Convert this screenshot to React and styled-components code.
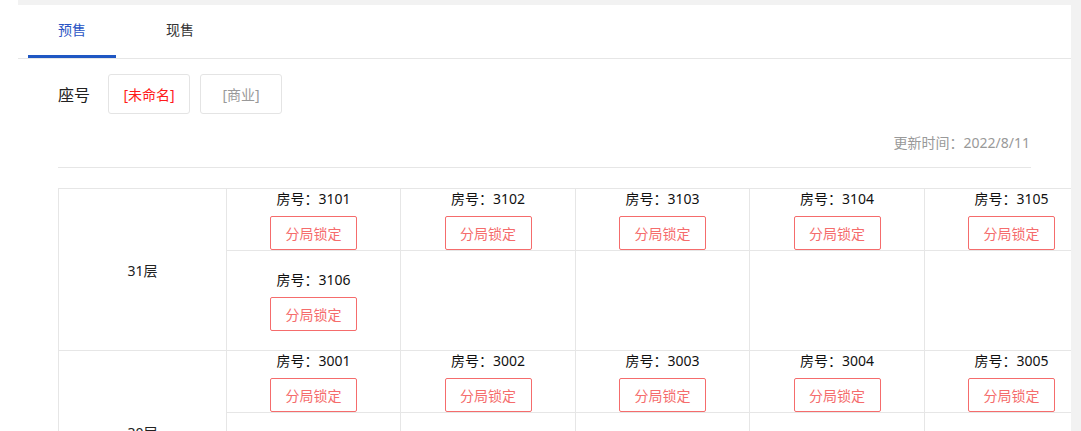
import React, { useState } from "react";
import styled, { createGlobalStyle } from "styled-components";

const GlobalStyle = createGlobalStyle`
  html, body {
    margin: 0;
    padding: 0;
    background: #ffffff;
    overflow: hidden;
    font-family: "Noto Sans", "Noto Sans CJK SC", sans-serif;
    color: #222;
  }
  * { box-sizing: border-box; }
`;

const Main = styled.div`
  margin-left: 18px;
  padding: 5px 10px 0 0;
  background: #f2f2f2;
  min-height: 431px;
`;

const Card = styled.div`
  background: #fff;
  overflow: hidden;
  min-height: 426px;
`;

const TabBar = styled.div`
  display: flex;
  gap: 20px;
  padding-left: 10px;
  border-bottom: 1px solid #e6e6e6;
`;

const Tab = styled.div`
  width: 88px;
  height: 53px;
  line-height: 50px;
  text-align: center;
  font-size: 14px;
  color: ${(p) => (p.$active ? "#2a55c4" : "#333")};
  border-bottom: 3px solid ${(p) => (p.$active ? "#1f57c3" : "transparent")};
  cursor: pointer;
`;

const Body = styled.div`
  padding: 15px 40px 0 40px;
`;

const SeatRow = styled.div`
  display: flex;
  align-items: center;
  gap: 10px;
`;

const SeatLabel = styled.span`
  font-size: 16px;
  color: #222;
  margin-right: 8px;
`;

const SeatButton = styled.div`
  width: 82px;
  height: 40px;
  display: flex;
  align-items: center;
  justify-content: center;
  border: 1px solid #e4e4e4;
  border-radius: 3px;
  font-size: 14px;
  color: ${(p) => (p.$active ? "#ff1a1a" : "#999")};
  cursor: pointer;
`;

const UpdateRow = styled.div`
  margin-top: 19px;
  padding-bottom: 14px;
  border-bottom: 1px solid #e6e6e6;
  text-align: right;
  font-size: 14px;
  line-height: 20px;
  color: #999;
  padding-right: 1px;
`;

const Table = styled.div`
  margin-top: 20px;
  width: 1041px;
  border-left: 1px solid #e6e6e6;
  border-top: 1px solid #e6e6e6;
`;

const FloorRow = styled.div`
  display: grid;
  grid-template-columns: 168px 1fr;
  min-height: 162px;
  border-bottom: 1px solid #e6e6e6;
`;

const FloorLabel = styled.div`
  display: flex;
  align-items: center;
  justify-content: center;
  border-right: 1px solid #e6e6e6;
  font-size: 14px;
  color: #222;
`;

const RoomsColumn = styled.div`
  display: flex;
  flex-direction: column;
`;

const RoomRow = styled.div`
  display: grid;
  grid-template-columns: 174px 175px 174px 175px 174px;
  flex: ${(p) => (p.$last ? 1 : "none")};
  border-bottom: ${(p) => (p.$last ? "none" : "1px solid #e6e6e6")};
`;

const RoomCell = styled.div`
  display: flex;
  flex-direction: column;
  align-items: center;
  justify-content: center;
  border-right: 1px solid #e6e6e6;
  min-height: 61px;
`;

const RoomNo = styled.div`
  font-size: 14px;
  line-height: 20px;
  color: #111;
  margin-bottom: 7px;
`;

const LockButton = styled.div`
  width: 87px;
  height: 34px;
  display: flex;
  align-items: center;
  justify-content: center;
  border: 1px solid #f56c6c;
  border-radius: 2px;
  font-size: 14px;
  color: #f56c6c;
  cursor: pointer;
`;

const floors = [
  { name: "31层", rooms: ["3101", "3102", "3103", "3104", "3105", "3106"] },
  { name: "30层", rooms: ["3001", "3002", "3003", "3004", "3005", "3006"] },
];

function chunk(arr, n) {
  const out = [];
  for (let i = 0; i < arr.length; i += n) out.push(arr.slice(i, i + n));
  return out;
}

export default function App() {
  const [tab, setTab] = useState(0);
  return (
    <>
      <GlobalStyle />
      <Main>
        <Card>
          <TabBar>
            {["预售", "现售"].map((t, i) => (
              <Tab key={t} $active={tab === i} onClick={() => setTab(i)}>
                {t}
              </Tab>
            ))}
          </TabBar>
          <Body>
            <SeatRow>
              <SeatLabel>座号</SeatLabel>
              <SeatButton $active>[未命名]</SeatButton>
              <SeatButton>[商业]</SeatButton>
            </SeatRow>
            <UpdateRow>更新时间：2022/8/11</UpdateRow>
            <Table>
              {floors.map((f) => {
                const rows = chunk(f.rooms, 5);
                return (
                  <FloorRow key={f.name}>
                    <FloorLabel>{f.name}</FloorLabel>
                    <RoomsColumn>
                      {rows.map((r, ri) => (
                        <RoomRow key={ri} $last={ri === rows.length - 1}>
                          {Array.from({ length: 5 }).map((_, ci) => (
                            <RoomCell key={ci}>
                              {r[ci] && (
                                <>
                                  <RoomNo>房号：{r[ci]}</RoomNo>
                                  <LockButton>分局锁定</LockButton>
                                </>
                              )}
                            </RoomCell>
                          ))}
                        </RoomRow>
                      ))}
                    </RoomsColumn>
                  </FloorRow>
                );
              })}
            </Table>
          </Body>
        </Card>
      </Main>
    </>
  );
}
